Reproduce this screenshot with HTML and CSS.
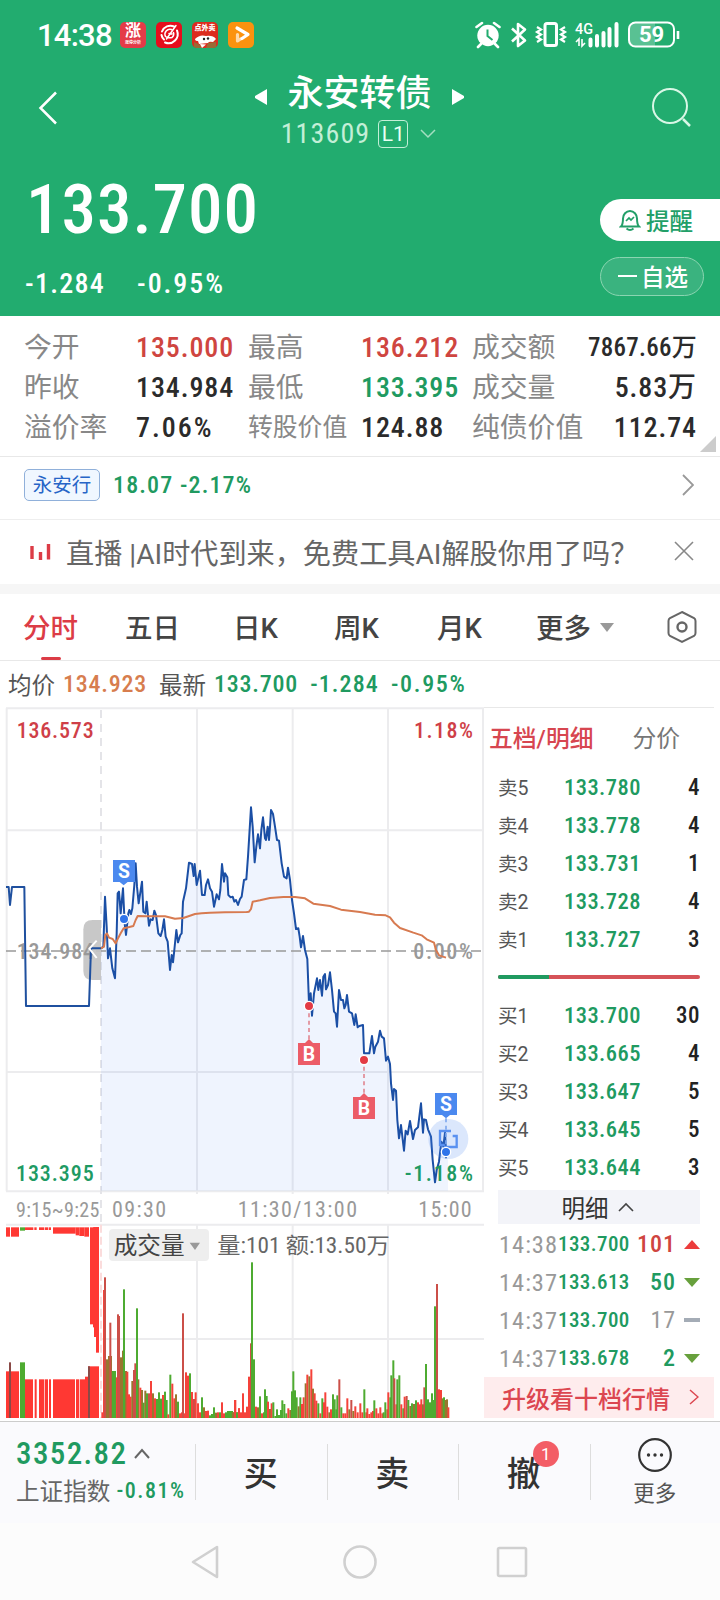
FILE: index.html
```html
<!DOCTYPE html>
<html lang="zh-CN">
<head>
<meta charset="utf-8">
<title>永安转债</title>
<link rel="stylesheet" href="styles.css">
</head>
<body>
<div class="app">
  <header class="top">
    <div class="status">
      <span class="clock">14:38</span>
      <span class="appicon red"><b>涨</b><i>涨停分析</i></span>
      <span class="appicon crimson"><svg width="25" height="25" viewBox="0 0 25 25" fill="none" stroke="#fff" stroke-width="1.500" stroke-linecap="round"><path d="M17 4.500A9 9 0 0 0 5 9.500M4.500 13A7.500 7.500 0 0 0 7 17.500M8 20.500A9.200 9.200 0 0 0 20 8.500" stroke-width="2"/><path d="M14.500 7.500A5 5 0 0 0 8.500 14.500Q11 16.500 15 15.500Q17.500 13 16.500 10.500M19 3.500L9.500 17M12 11.500l3 .5"/></svg></span>
      <span class="appicon food"><b>点外卖</b><svg width="25" height="14" viewBox="0 0 25 14"><path d="M2 5Q7 0 13 2Q20 1 23 5L20 8Q16 7 15 9L6 10L5 7Q2 7 2 5Z" fill="#fff"/><path d="M1 8l6 3 2 3H1zM15 9l8-1v6H13z" fill="#9a6a35"/><path d="M7 10l6 .5L9 14z" fill="#fff"/><circle cx="11" cy="5" r="1.200" fill="#222"/><circle cx="15" cy="4.500" r="1.200" fill="#222"/></svg></span>
      <span class="appicon orange"><svg width="25" height="25" viewBox="0 0 25 25" fill="none" stroke="#fff" stroke-width="3.200" stroke-linecap="round" stroke-linejoin="round"><path d="M8 6L19 12.500L13 16.500"/><path d="M8.500 12.500v6.500l3-2" opacity=".65"/></svg></span>
      <svg class="sysicons" width="206" height="28" viewBox="0 0 206 28" fill="none" stroke="#fff">
        <circle cx="13" cy="14.500" r="10.700" fill="#fff" stroke="none"/>
        <path d="M1.500 6L7 2M24.500 6L19 2M6 23l-3 3M20 23l3 3" stroke-width="2.600" stroke-linecap="round"/>
        <path d="M12.500 8.500v6.500l5 4" stroke="#22ac6f" stroke-width="2"/>
        <path d="M37 7.500l13 12-7 5.500V3l7 5.500-13 12" stroke-width="2.600" stroke-linejoin="round"/>
        <rect x="70" y="2.500" width="11.500" height="22" rx="2" stroke-width="3"/>
        <path d="M62 6l4 2.500-4 2.500 4 2.500-4 2.500 4 2.500-4 2.500M90 6l-4 2.500 4 2.500-4 2.500 4 2.500-4 2.500 4 2.500" stroke-width="2.200"/>
        <g class="sys" fill="#fff" stroke="none"><text x="100" y="13" font-size="15" textLength="18" lengthAdjust="spacingAndGlyphs">4G</text>
        <text x="164" y="20.500" font-size="22" font-weight="700" textLength="25">59</text></g>
        <path d="M104 25v-7l-3 3M107 18v7l3-3" stroke-width="1.600"/>
        <path d="M115.500 18.500v6M122 15v9.500M128.500 12v12.500M134.500 8v16.500M141.500 3v21.500" stroke-width="4" stroke-linecap="round"/>
        <path d="M158 2h22v24h-22q-5-1-5-6V8q0-6 5-6z" fill="#fff" opacity=".25" stroke="none"/>
        <rect x="154" y="1.500" width="45" height="24" rx="6.500" stroke-width="2"/>
        <path d="M203 10v8" stroke-width="2.600"/>
      </svg>
    </div>
    <div class="titlebar">
      <svg class="back" width="20" height="34" viewBox="0 0 20 34" fill="none" stroke="#fff" stroke-width="2.500"><path d="M18 1.500L2.500 17L18 32.500"/></svg>
      <div class="titles">
        <div class="name"><svg width="12" height="18" viewBox="0 0 12 18"><path d="M12 1v16L0 10V8z" fill="#fff"/></svg><h1>永安转债</h1><svg width="12" height="18" viewBox="0 0 12 18"><path d="M0 1v16L12 10V8z" fill="#fff"/></svg></div>
        <div class="code"><span class="n">113609</span><span class="level">L1</span><svg width="16" height="10" viewBox="0 0 16 10" fill="none" stroke="#a4dfc1" stroke-width="1.500"><path d="M1 1l7 7 7-7"/></svg></div>
      </div>
      <svg class="search" width="40" height="40" viewBox="0 0 40 40" fill="none" stroke="#d9f7e6" stroke-width="2"><circle cx="18" cy="18" r="17"/><path d="M31 31l7 7" stroke-width="2.500"/></svg>
    </div>
    <div class="quote">
      <div class="quote-left">
        <div class="price n">133.700</div>
        <div class="change n"><span>-1.284</span><span class="pct">-0.95%</span></div>
      </div>
      <div class="quote-right">
        <button class="remind"><svg width="22" height="24" viewBox="0 0 22 24" fill="none" stroke="#229f68" stroke-width="2"><path d="M2 18.500c2-2 2-4 2-8a7 7.500 0 0 1 14 0c0 4 0 6 2 8zM7.500 20.500q3.500 3 7 0"/><path d="M7 13l3-3 2 2 3-3" stroke-width="1.700"/></svg>提醒</button>
        <button class="fav"><i></i>自选</button>
      </div>
    </div>
  </header>

  <section class="stats">
    <span>今开</span><b class="n up">135.000</b><span>最高</span><b class="n up">136.212</b><span>成交额</span><b class="n end small">7867.66万</b>
    <span>昨收</span><b class="n">134.984</b><span>最低</span><b class="n down">133.395</b><span>成交量</span><b class="n end">5.83万</b>
    <span>溢价率</span><b class="n pct">7.06%</b><span class="tight">转股价值</span><b class="n">124.88</b><span>纯债价值</span><b class="n end">112.74</b>
    <i class="corner"></i>
  </section>

  <section class="stock"><span class="tag">永安行</span><span class="n down mid">18.07 -2.17%</span>
    <svg width="12" height="22" viewBox="0 0 12 22" fill="none" stroke="#999" stroke-width="1.800"><path d="M1 1l10 10L1 21"/></svg></section>

  <section class="live"><svg width="22" height="17" viewBox="0 0 22 17" stroke="#dc3c46" stroke-width="3.400"><path d="M2 3v13M10.500 9v8M18.500 1v15.500"/></svg><span>直播 |AI时代到来，免费工具AI解股你用了吗？</span>
    <svg class="close" width="20" height="20" viewBox="0 0 20 20" stroke="#888" stroke-width="1.600"><path d="M1 1l18 18M19 1L1 19"/></svg></section>

  <nav class="tabs">
    <span class="active">分时</span><span>五日</span><span>日K</span><span>周K</span><span>月K</span><span class="more">更多<i></i></span>
    <svg width="30" height="34" viewBox="0 0 30 34" fill="none" stroke="#666" stroke-width="2"><path d="M15 2l12 6q1.500 1 1.500 3v12q0 2-1.500 3l-12 6-12-6q-1.500-1-1.500-3V11q0-2 1.500-3z"/><circle cx="15" cy="17" r="4.500" stroke-width="2.400"/></svg>
  </nav>

  <div class="avg"><span>均价</span><b class="n orange-t">134.923</b><span>最新</span><b class="n down">133.700</b><b class="n down mid">-1.284</b><b class="n down pct">-0.95%</b></div>

  <main class="board">
    <svg class="chart" width="484" height="713" viewBox="0 21 1452 2139">
      <g stroke="#ececee" stroke-width="6" fill="none">
        <path d="M18 25H1452M18 391H1452M18 1116H1452M18 1474H1452M18 1574H1452M303 1917H1452" />
        <path d="M20 25V1474M591 25V1482M878 25V1482M1164 25V1482M591 1572V2154M878 1572V2154M1164 1572V2154M1449 25V1474"/>
        <path d="M303 30V1574" stroke-dasharray="24 18" stroke="#e4e4e8"/>
      </g>
      <polygon id="area" fill="#4080f0" fill-opacity=".085"/>
      <path d="M18 753H1452" stroke="#999" stroke-width="5" stroke-dasharray="30 15"/>
      <path d="M303 660H278q-28 0-28 28V812q0 28 28 28H303z" fill="#c3c3c3" fill-opacity=".92"/>
      <g class="svgn">
        <text x="50" y="114" textLength="231" fill="#cf3f48">136.573</text>
        <text x="1242" y="114" textLength="177" fill="#cf3f48">1.18%</text>
        <text x="50" y="778" textLength="232" fill="#999">134.984</text>
        <text x="1240" y="778" textLength="179" fill="#999">0.00%</text>
      </g>
      <g fill="none" stroke-width="6" stroke-linejoin="round">
        <polyline points="18,561 26,561 30,615 36,561 73,561 78,918 267,918 273,745 303,745" stroke="#1f509f"/>
        <polyline id="price" stroke="#1b4fa5"/>
        <polyline id="average" stroke="#d77a50"/>
        <path d="M290 722L268 746L290 774" stroke="#fff"/>
        <path d="M303 1574V2154" stroke="#fbdcdc" stroke-dasharray="24 12"/>
      </g>
      <circle cx="1345" cy="1317" r="60" fill="#4d86f0" fill-opacity=".2"/>
      <path d="M1353 1293H1320V1335H1334M1350 1341H1370V1308H1358M1332 1341H1370" stroke="#5a91f0" stroke-width="7" fill="none"/>
      <g stroke-width="5" stroke-dasharray="12 10" stroke="#e08a94"><path d="M927 940V1018M1092 1100V1182"/><path d="M1338 1255V1355" stroke="#7fa8ee"/></g>
      <g fill="#4b89ef">
        <path d="M339 480h66v66h-22l-12 10l-12-10h-20z"/><path d="M1305 1179h66v66h-21l-12 10l-12-10h-21z"/>
      </g>
      <g fill="#ec5c67">
        <path d="M894 1029h21l12-12l12 12h21v66h-66z"/><path d="M1059 1191h21l12-12l12 12h21v66h-66z"/>
      </g>
      <g class="pins" fill="#fff" text-anchor="middle"><text x="372" y="533">S</text><text x="1338" y="1232">S</text><text x="927" y="1083">B</text><text x="1092" y="1245">B</text></g>
      <g stroke="#fff" stroke-width="4"><circle cx="372" cy="657" r="14" fill="#2f74ea"/><circle cx="1338" cy="1356" r="14" fill="#2f74ea"/><circle cx="927" cy="918" r="14" fill="#e33a44"/><circle cx="1092" cy="1080" r="14" fill="#e33a44"/></g>
      <g class="svgn">
        <text x="48" y="1442" textLength="233" fill="#209a63">133.395</text>
        <text x="1214" y="1442" textLength="205" fill="#209a63">-1.18%</text>
      </g>
      <g class="svgn thin" fill="#999">
        <text x="48" y="1550" font-size="60" textLength="250">9:15~9:25</text>
        <text x="336" y="1550" textLength="162">09:30</text>
        <text x="713" y="1550" textLength="358">11:30/13:00</text>
        <text x="1255" y="1550" textLength="160">15:00</text>
      </g>
      <rect x="327" y="1587" width="300" height="96" rx="12" fill="#eeeeee"/>
      <path d="M569 1628H600L585 1650z" fill="#999"/>
      <g class="svgn cn" fill="#444"><text x="341" y="1661" font-size="71">成交量</text><text x="652" y="1660" textLength="517" lengthAdjust="spacingAndGlyphs" fill="#666">量:101 额:13.50万</text></g>
      <g id="bars"></g>
    </svg>

    <aside class="book">
      <div class="booktabs"><span>五档/明细</span><span>分价</span></div>
      <div class="levels">
        <div><span>卖5</span><b class="n">133.780</b><em class="n">4</em></div>
        <div><span>卖4</span><b class="n">133.778</b><em class="n">4</em></div>
        <div><span>卖3</span><b class="n">133.731</b><em class="n">1</em></div>
        <div><span>卖2</span><b class="n">133.728</b><em class="n">4</em></div>
        <div><span>卖1</span><b class="n">133.727</b><em class="n">3</em></div>
      </div>
      <div class="ratio"><i></i></div>
      <div class="levels">
        <div><span>买1</span><b class="n">133.700</b><em class="n">30</em></div>
        <div><span>买2</span><b class="n">133.665</b><em class="n">4</em></div>
        <div><span>买3</span><b class="n">133.647</b><em class="n">5</em></div>
        <div><span>买4</span><b class="n">133.645</b><em class="n">5</em></div>
        <div><span>买5</span><b class="n">133.644</b><em class="n">3</em></div>
      </div>
      <div class="detail">明细<svg width="16" height="10" viewBox="0 0 16 10" fill="none" stroke="#444" stroke-width="1.600"><path d="M1 9l7-7 7 7"/></svg></div>
      <div class="ticks">
        <div><span class="n">14:38</span><b class="n">133.700</b><em class="n up">101</em><i class="tri-up"></i></div>
        <div><span class="n">14:37</span><b class="n">133.613</b><em class="n down">50</em><i class="tri-down"></i></div>
        <div><span class="n">14:37</span><b class="n">133.700</b><em class="n flat">17</em><i class="dash"></i></div>
        <div><span class="n">14:37</span><b class="n">133.678</b><em class="n down">2</em><i class="tri-down"></i></div>
      </div>
      <div class="upgrade">升级看十档行情<svg width="10" height="16" viewBox="0 0 10 16" fill="none" stroke="#dc4650" stroke-width="1.500"><path d="M1 1l8 7-8 7"/></svg></div>
    </aside>
  </main>

  <footer class="trade">
    <div class="index">
      <div><b class="n down">3352.82</b><svg width="16" height="11" viewBox="0 0 16 11" fill="none" stroke="#666" stroke-width="2"><path d="M1 10l7-8 7 8"/></svg></div>
      <div><span>上证指数</span><em class="n down pct">-0.81%</em></div>
    </div>
    <div class="act">买</div><div class="act">卖</div><div class="act"><span>撤<i class="badge">1</i></span></div>
    <div class="moreact"><svg width="36" height="36" viewBox="0 0 36 36"><circle cx="18" cy="18" r="15.800" fill="none" stroke="#333" stroke-width="2.200"/><g fill="#333"><circle cx="11.500" cy="18" r="1.700"/><circle cx="18" cy="18" r="1.700"/><circle cx="24.500" cy="18" r="1.700"/></g></svg><span>更多</span></div>
  </footer>
  <div class="sysnav">
    <svg width="30" height="36" viewBox="0 0 30 36"><path d="M27 3v30L3 18z"/></svg>
    <svg width="36" height="36" viewBox="0 0 36 36"><circle cx="18" cy="18" r="15.500"/></svg>
    <svg width="32" height="32" viewBox="0 0 32 32"><rect x="2" y="2" width="28" height="28" rx="1.500"/></svg>
  </div>
</div>
<script src="chart.js"></script>
</body>
</html>
```
FILE: styles.css
```css
* { box-sizing: border-box; }
body { margin: 0; background: #fff; font-family: Roboto, "Noto Sans CJK SC", sans-serif; color: #333; }
h1, b, em, i { font-weight: inherit; font-style: normal; margin: 0; }
button { font: inherit; border: 0; padding: 0; margin: 0; }
svg { display: block; flex: none; }
.app { width: 720px; height: 1600px; overflow: hidden; display: flex; flex-direction: column; }
.n { font-weight: 500; font-stretch: 75%; letter-spacing: .02em; white-space: nowrap; }
.mid { letter-spacing: .047em; }
.pct, .stats .pct { letter-spacing: .07em; }
.up { color: #cf4540 !important; }
.down { color: #209a60 !important; }

.top { height: 316px; background: #22ac6f; color: #fff; }
.status { height: 70px; padding: 0 0 0 37px; display: flex; align-items: center; }
.clock { font-size: 31px; width: 83px; font-weight: 500; letter-spacing: -.025em; }
.appicon { width: 26px; height: 26px; margin-right: 10px; border-radius: 5px; overflow: hidden; display: flex; flex-direction: column; align-items: center; }
.red { background: #e43b48; }
.red b { font-size: 16px; line-height: 18px; font-weight: 700; }
.red i { font-size: 4px; line-height: 5px; font-weight: 700; }
.crimson { background: #e60d1c; }
.food { background: #dc2c1e; }
.food b { font-size: 7px; line-height: 12px; font-weight: 900; }
.orange { background: #fb920f; }
.sysicons { margin-left: auto; margin-right: 39px; margin-top: -1px; }
.titlebar { height: 94px; padding: 0 28px 0 38px; display: flex; justify-content: space-between; }
.back { margin-top: 21px; }
.titles { margin-left: 9px; }
.name { height: 48px; display: flex; align-items: center; justify-content: center; gap: 20px; }
.name svg { margin-top: 5px; }
.name h1 { font-size: 36px; line-height: 46px; font-weight: 500; }
.code { height: 31px; display: flex; align-items: center; justify-content: center; color: #c3efd7; font-size: 28px; margin-left: -2px; }
.code .n { font-weight: 400; letter-spacing: .04em; }
.level { width: 30px; height: 28px; border: 1px solid #c3efd7; border-radius: 4px; font-size: 21px; line-height: 27px; text-align: center; margin: 0 12px 0 8px; color: #e8fff3; }
.search { margin-top: 18px; }
.quote { display: flex; justify-content: space-between; height: 152px; }
.quote-left { padding-left: 26px; }
.price { font-size: 69px; line-height: 92px; letter-spacing: .014em; }
.change { display: flex; gap: 32px; font-size: 28px; line-height: 56px; letter-spacing: .045em; margin-left: -1px; }
.quote-right { width: 120px; padding-top: 35px; }
.remind { display: flex; align-items: center; width: 120px; height: 42px; padding-left: 19px; gap: 5px; background: #fff; border-radius: 21px 0 0 21px; color: #229f68; font-size: 23.500px; font-weight: 500; }
.fav { display: flex; align-items: center; gap: 4px; width: 104px; height: 39px; margin-top: 16px; padding: 0 0 1px 17px; border: 1px solid #8bd5b1; border-radius: 20px; background: #3ab37f; color: #fff; font-size: 23.500px; font-weight: 500; }
.fav i { width: 19px; height: 2px; background: #fff; }

.stats { position: relative; height: 141px; padding: 12px 23px 0 24px; display: grid; grid-template-columns: 112px 112px 113px 111px 120px 105px; grid-auto-rows: 40px; line-height: 40px; font-size: 27.800px; color: #888; border-bottom: 1px solid #e8e8e8; white-space: nowrap; }
.stats b { color: #2b2b2b; font-size: 28px; letter-spacing: .032em; }
.stats .end { justify-self: end; }
.stats .small { font-size: 25px; letter-spacing: .01em; }
.stats .tight { font-size: 24.800px; }
.corner { position: absolute; right: 4px; bottom: 4px; border-left: 16px solid transparent; border-bottom: 16px solid #ccc; }

.stock { height: 63px; display: flex; align-items: center; padding: 0 26px 6px 24px; border-bottom: 1px solid #eee; font-size: 24px; }
.tag { width: 76px; height: 32px; border: 1px solid #90b0da; border-radius: 5px; background: #f0f7ff; color: #2765c7; font-size: 19.500px; line-height: 31px; text-align: center; margin-right: 13px; }
.stock svg, .live .close { margin-left: auto; }
.live { height: 74px; border-bottom: 10px solid #f6f6f6; display: flex; align-items: center; padding: 0 26px 2px 30px; font-size: 28.150px; color: #666; white-space: nowrap; }
.live span { margin-left: 14px; }
.tabs { height: 67px; position: relative; display: grid; grid-template-columns: 102px 108px 101px 103px 99px 131px 40px; align-items: center; padding: 0 0 2px 23px; border-bottom: 1px solid #e8e8e8; font-size: 27.500px; font-weight: 500; color: #444; }
.tabs svg { margin-top: 2px; }
.active { position: relative; color: #dc3c46; }
.active::after { content: ""; position: absolute; left: 18px; bottom: -14px; width: 20px; height: 3px; border-radius: 2px; background: #dc3c46; }
.more { display: flex; align-items: center; gap: 9px; }
.more i { border: 7px solid transparent; border-top: 9px solid #999; border-bottom: 0; margin-top: 3px; }
.avg { height: 46px; display: flex; align-items: center; padding-left: 8px; font-size: 23.500px; color: #555; white-space: nowrap; }
.avg b { font-size: 24px; margin: 0 12px 0 0; }
.avg b:not(.mid):not(.pct) { letter-spacing: .032em; }
.avg span { margin-right: 8px; }
.orange-t { color: #d77d4e; }

.board { display: flex; height: 713px; }
.svgn { font-family: Roboto, "Noto Sans CJK SC", sans-serif; font-size: 66px; font-weight: 500; font-stretch: 75%; }
.svgn.thin, .svgn.cn { font-weight: 400; }
.pins { font-family: Roboto, sans-serif; font-size: 58px; font-weight: 700; }
.sys { font-family: Roboto, sans-serif; font-weight: 500; }
.book { width: 230px; border-top: 1px solid #e8e8e8; font-size: 23px; }
.booktabs { display: flex; height: 60px; padding-left: 5px; gap: 39px; line-height: 62px; color: #777; font-size: 23.800px; }
.booktabs span:first-child { color: #d74650; font-weight: 500; }
.levels { padding: 0 14px; }
.levels div { display: flex; align-items: center; height: 38px; }
.levels span { width: 66px; font-size: 19.500px; color: #555; padding-bottom: 2px; }
.levels b { color: #209a60; font-size: 22.500px; }
.levels em { margin-left: auto; color: #222; }
.ratio { height: 4px; margin: 17px 14px 18px; border-radius: 2px; background: #d65358; overflow: hidden; }
.ratio + .levels { margin-top: -1px; }
.ratio i { display: block; width: 51px; height: 4px; background: #209a60; }
.detail { margin: 4px 14px 0; height: 34px; background: #f3f4f9; display: flex; align-items: center; justify-content: center; gap: 9px; padding-right: 3px; font-size: 23.500px; }
.ticks { padding: 1px 14px 0 15px; }
.ticks div { height: 38px; display: flex; align-items: center; font-size: 21px; }
.ticks span { width: 59px; font-size: 24.500px; font-weight: 400; color: #999; letter-spacing: .04em; }
.ticks b { color: #209a60; }
.ticks em { margin-left: auto; margin-right: 8px; font-size: 24px; letter-spacing: .04em; }
.ticks .flat { color: #999; font-weight: 400; }
.tri-up { border: 8px solid transparent; border-top: 0; border-bottom: 9px solid #ec3c3c; }
.tri-down { border: 8px solid transparent; border-bottom: 0; border-top: 9px solid #67a03c; }
.dash { width: 16px; height: 4px; background: #a4acb6; }
.upgrade { height: 41px; background: #feeced; color: #dc4650; font-size: 24px; font-weight: 500; display: flex; align-items: center; justify-content: space-between; padding: 0 15px 1px 18px; }

.trade { height: 102px; border-top: 1px solid #ccc; background: #fafafd; display: flex; margin-top: 1px; }
.index { width: 195px; padding: 12px 0 0 16px; white-space: nowrap; }
.index div { display: flex; align-items: center; height: 38px; gap: 7px; }
.index b { font-size: 31px; letter-spacing: .045em; }
.index span { font-size: 23.600px; color: #666; }
.index em { font-size: 22px; }
.index div + div { gap: 6px; height: 36px; }
.act { width: 131.500px; position: relative; display: flex; align-items: center; justify-content: center; font-size: 34px; font-weight: 500; padding-bottom: 2px; }
.act span { position: relative; }
.act::before, .moreact::before { content: ""; position: absolute; left: 0; top: 22px; height: 56px; border-left: 1px solid #ddd; }
.badge { position: absolute; left: 26px; top: -6px; width: 26px; height: 26px; border-radius: 13px; background: #f35d66; color: #fff; font-size: 17px; line-height: 26px; text-align: center; font-weight: 400; }
.moreact { position: relative; flex: 1; display: flex; flex-direction: column; align-items: center; padding-top: 15px; font-size: 21.500px; color: #555; }
.moreact span { line-height: 36px; margin-top: 3px; }
.sysnav { flex: 1; background: #fcfcfc; position: relative; display: flex; align-items: center; padding: 0 192px 0 190px; justify-content: space-between; }
.sysnav svg:nth-child(2) { margin-left: 4px; }
.sysnav path, .sysnav circle, .sysnav rect { fill: none; stroke: #d0d0d0; stroke-width: 2.600; stroke-linejoin: round; }
```
FILE: chart.js
```js
// Intraday series, chart units are thirds of a pixel.
const price = "303,745 310,740 315,590 320,680 324,775 330,745 337,805 345,835 350,700 353,580 357,575 362,640 369,565 374,670 378,705 385,640 388,630 393,642 397,625 403,555 407,490 411,560 416,610 426,545 430,635 436,640 440,605 447,677 452,658 458,660 463,632 468,645 475,700 482,708 487,690 492,658 497,710 503,725 510,810 515,765 519,787 523,750 529,690 534,727 541,705 545,700 549,605 558,565 567,488 576,492 581,528 584,492 590,555 600,512 606,585 614,585 618,555 624,538 630,565 636,575 642,620 650,583 657,598 661,570 666,492 672,545 675,520 682,532 685,585 692,592 698,590 703,605 708,600 714,615 720,597 725,590 732,540 739,538 744,470 753,322 758,380 764,487 769,440 774,403 780,445 784,390 789,352 795,415 798,420 803,380 807,420 810,380 813,330 819,342 825,380 831,420 837,422 845,490 852,530 860,535 864,503 870,540 876,600 882,640 888,687 895,685 899,710 903,742 909,708 915,750 922,777 927,910 932,880 936,947 942,880 951,835 955,870 960,840 966,887 970,830 975,822 978,868 984,855 990,817 996,870 1002,935 1007,940 1011,980 1017,870 1023,900 1029,900 1033,925 1037,915 1041,885 1047,935 1056,940 1063,975 1067,943 1073,982 1078,978 1089,975 1092,1060 1108,1060 1116,1008 1122,1060 1126,1040 1134,1025 1140,992 1145,1010 1152,1015 1158,1082 1164,1070 1170,1092 1173,1150 1179,1200 1182,1167 1188,1172 1192,1260 1197,1315 1203,1275 1212,1352 1217,1292 1223,1303 1230,1263 1239,1317 1245,1290 1254,1282 1263,1210 1269,1298 1272,1258 1278,1260 1284,1288 1293,1310 1298,1380 1305,1447 1310,1410 1317,1385 1324,1325 1330,1340 1335,1298 1338,1350 1338,1375";
const average = "303,745 312,740 316,705 321,700 327,713 338,717 347,730 355,713 362,700 371,685 385,682 400,678 407,660 413,648 440,649 495,649 525,656 550,654 585,642 605,640 630,638 675,637 740,636 747,635 753,627 758,605 780,601 810,594 850,591 885,591 915,595 940,611 990,618 1023,629 1080,636 1125,644 1157,646 1170,652 1182,668 1200,684 1240,698 1265,706 1280,718 1302,728 1308,750 1317,766 1338,773";
document.getElementById("price").setAttribute("points", price);
document.getElementById("average").setAttribute("points", average);
document.getElementById("area").setAttribute("points", price + " 1344,1375 1344,1472 303,1472");

const colors = { r: "#f5423a", g: "#4eab31", d: "#cb4f48", m: "#98762f", k: "#8a4a46" };
const bars = document.getElementById("bars");
function bar(x, w, top, bottom, c) {
  const r = document.createElementNS("http://www.w3.org/2000/svg", "rect");
  r.setAttribute("x", x); r.setAttribute("y", top + 1440);
  r.setAttribute("width", w); r.setAttribute("height", bottom - top);
  r.setAttribute("fill", colors[c] || c);
  bars.appendChild(r);
}
// Volume: left edge, top, colour
const volume = "304,697,r 309,330,r 318,538,m 324,528,m 330,528,m 336,573,g 342,573,g 348,592,r 354,408,d 360,532,m 366,512,m 375,573,m 379,575,r 384,643,r 389,650,r 394,603,m 399,570,d 403,550,d 412,598,m 418,623,r 423,630,m 428,668,g 433,632,m 438,640,g 444,640,d 450,603,r 456,640,m 462,655,r 468,657,g 474,637,g 480,656,g 486,645,r 492,635,g 497,660,g 502,703,r 508,584,g 514,611,r 520,655,r 525,643,m 531,665,g 537,700,r 543,697,r 549,700,r 555,577,r 561,587,r 567,580,g 573,636,r 579,657,d 584,637,r 591,670,r 597,697,r 603,652,g 609,682,m 615,693,r 621,692,r 627,706,g 633,702,g 639,682,g 645,698,m 651,697,r 657,697,g 663,667,r 669,700,r 675,697,g 681,693,g 687,693,g 693,693,g 699,697,m 703,660,r 708,697,r 714,685,r 720,697,r"
  .split(" ").concat("6,697,m 12,660,r 18,697,g 24,685,r 30,702,r 36,640,r 42,697,r 48,680,r 54,590,r 60,490,d 69,538,g 75,680,r 81,682,m 87,649,g 93,700,r 99,697,g 102,628,g 107,648,g 111,665,r 117,687,m 122,670,r 127,667,g 133,708,g 138,688,g 144,705,g 150,690,g 154,661,g 160,672,g 166,700,g 172,685,r 178,690,m 183,634,g 187,574,g 192,631,g 197,652,g 203,679,m 208,652,g 213,672,r 218,652,r 224,610,m 229,584,r 235,589,m 241,568,r 246,626,m 251,640,r 256,662,r 262,670,g 268,700,r 274,655,g 279,667,r 283,637,r 289,680,r 295,697,m 300,688,r 306,643,g 311,658,g 316,688,g 319,646,g 325,598,d 331,682,g 337,700,r 343,700,r 349,655,r 355,688,m 361,660,d 367,693,m 373,679,r 380,697,r 388,670,r 394,697,r 400,628,g 406,697,m 409,685,r 415,702,r 421,697,r 426,693,r 430,661,g 436,685,r 442,700,r 448,682,r 454,700,r 458,697,g 463,667,g 469,688,m 472,637,r 478,652,g 481,586,g 487,541,g 490,595,d 496,673,r 499,598,g 505,586,g 511,673,r 517,685,g 521,650,r 527,648,d 532,660,g 538,678,m 543,670,g 549,672,m 555,661,g 561,667,r 567,673,r 571,658,r 576,673,m 580,622,d 585,552,g 591,658,g 597,667,g 603,640,g 609,660,g 618,628,r 624,628,r 630,630,r 634,655,m 639,652,g 644,660,m 648,658,m 652,682,r"
  .split(" ").map(s => { const p = s.split(","); return [+p[0] + 690, p[1], p[2]].join(","); }));
volume.forEach(s => { const [x, t, c] = s.split(","); bar(+x, 6, +t, 714, c); });
[[312,292,"d"],[328,428,"d"],[351,403,"d"],[369,328,"g"],[408,385,"g"],[546,400,"d"],[753,247,"g"],[1302,379,"g"],[1308,312,"d"]].forEach(([x, t, c]) => bar(x, 6, t, 714, c));

// Call auction: unmatched volume hangs from the top, matched stands on the base
[[18,12,170],[33,24,170],[75,25,150],[103,7,150],[117,15,150],[134,11,150],[147,6,150],[159,68,161],[227,11,166],[238,15,168],[253,14,170],[270,27,433],[279,18,442],[282,15,471],[288,9,518]].forEach(([x, w, b]) => bar(x, w, 142, b, "#ff3833"));
bar(60, 15, 142, 152, "g");
[[18,39,574],[75,24,598],[104,6,598],[117,15,598],[134,10,598],[147,6,598],[159,66,598],[228,9,598],[239,16,598],[255,9,590],[264,33,559]].forEach(([x, w, t]) => bar(x, w, t, 714, "#ff3833"));
bar(60, 15, 547, 714, "g");
bar(27, 6, 547, 714, "k");
bar(264, 6, 559, 714, "k");
```
